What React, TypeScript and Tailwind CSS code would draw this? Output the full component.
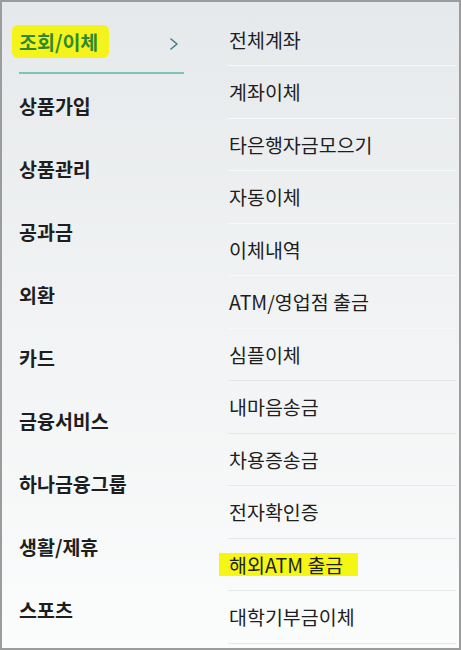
const mainMenus = [
  '상품가입',
  '상품관리',
  '공과금',
  '외환',
  '카드',
  '금융서비스',
  '하나금융그룹',
  '생활/제휴',
  '스포츠',
];

const subMenus = [
  '전체계좌',
  '계좌이체',
  '타은행자금모으기',
  '자동이체',
  '이체내역',
  'ATM/영업점 출금',
  '심플이체',
  '내마음송금',
  '차용증송금',
  '전자확인증',
  '해외ATM 출금',
  '대학기부금이체',
];

export default function App() {
  return (
    <div
      className="flex h-[650px] w-[461px] border-2 border-[#9c9c9c] bg-gradient-to-b from-[#e6e9eb] via-[#f1f3f4] to-[#fbfcfc] text-[#1e1e1e]"
      style={{ fontFamily: '"Noto Sans CJK KR", "Noto Sans", sans-serif' }}
    >
      {/* main menu */}
      <div className="w-[182px] shrink-0 pl-[17px] pt-[9px]">
        <div className="flex h-[63px] items-center justify-between border-b-2 border-[#7fc3b8] pr-[5px]">
          <span className="relative">
            <span className="absolute -left-[7px] -right-[11px] -top-[2px] -bottom-[2px] rounded-[6px] bg-[#f4f41c]" />
            <span className="relative text-[19.5px] font-bold text-[#2f8a2f]">조회/이체</span>
          </span>
          <svg width="10" height="14" viewBox="0 0 10 14" className="mt-[4px]">
            <polyline
              points="2,2 8,7 2,12"
              fill="none"
              stroke="#3f8088"
              strokeWidth="1.6"
              strokeLinecap="round"
              strokeLinejoin="round"
            />
          </svg>
        </div>
        {mainMenus.map((m) => (
          <div key={m} className="flex h-[63px] items-center text-[19.5px] font-bold">
            {m}
          </div>
        ))}
      </div>

      {/* sub menu */}
      <div className="ml-[44px] flex-1 pr-[3px] pt-[11.75px]">
        {subMenus.map((s, i) => (
          <div
            key={s}
            className={`flex h-[52.5px] items-center border-b pl-[1px] text-[19.5px] ${
              i < 6 ? 'border-[#f7f8f9]' : 'border-[#e5e8ea]'
            }`}
          >
            {s === '해외ATM 출금' ? (
              <span className="relative">
                <span className="absolute -left-[10px] -right-[15px] top-[3px] bottom-[3px] bg-[#f6f614]" />
                <span className="relative">{s}</span>
              </span>
            ) : (
              s
            )}
          </div>
        ))}
      </div>
    </div>
  );
}
